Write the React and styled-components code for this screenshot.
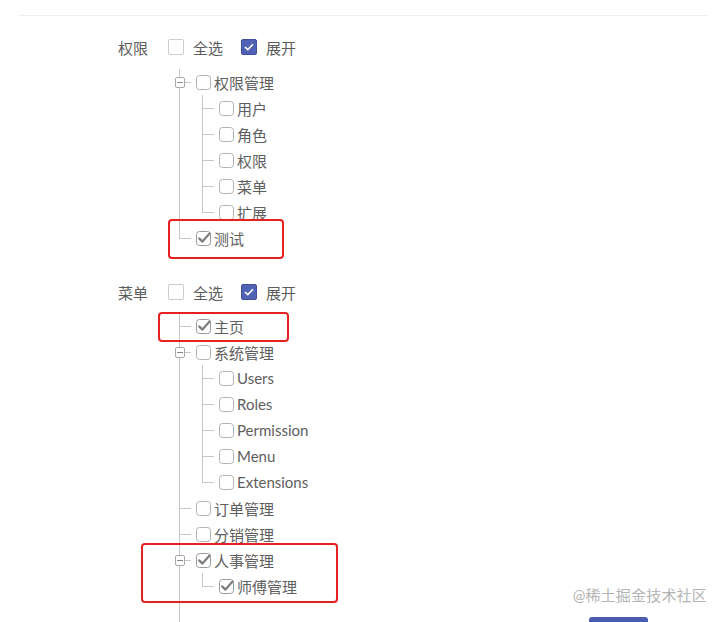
import React from 'react';
import styled, { createGlobalStyle } from 'styled-components';

const GlobalStyle = createGlobalStyle`
  body {
    margin: 0;
    background: #fff;
    font-family: Lato, "Noto Sans CJK SC", sans-serif;
    color: #5a5a5a;
  }
`;

const Page = styled.div`
  position: relative;
  width: 723px;
  height: 622px;
  overflow: hidden;
  padding-top: 15px;
  box-sizing: border-box;
`;

const Rule = styled.div`
  height: 1px;
  margin: 0 15px 0 18px;
  background: #f0f0f0;
`;

const Section = styled.section`
  padding-left: 118px;
  margin-top: ${p => p.$top}px;
`;

const Header = styled.div`
  display: flex;
  align-items: center;
  height: 26px;
  font-size: 15px;
`;

const Label = styled.span`
  width: 50px;
  color: #5c5c5c;
`;

const Option = styled.label`
  display: flex;
  align-items: center;
  gap: 9px;
  margin-right: 18px;
  color: #5c5c5c;
`;

const HeadBox = styled.span`
  width: 16px;
  height: 16px;
  box-sizing: border-box;
  border: 1px solid ${p => (p.$on ? '#3f4f9e' : '#c9ccd3')};
  border-radius: 2px;
  background: ${p => (p.$on ? '#5062b4' : '#fff')};
  display: flex;
  align-items: center;
  justify-content: center;
`;

const Tree = styled.ul`
  list-style: none;
  padding: 0;
  margin: ${p => (p.$root ? `${p.$gap}px 0 0 61px` : '0 0 0 6px')};
`;

const Node = styled.li`
  position: relative;
  padding-left: 17px;

  &::before {
    content: '';
    position: absolute;
    left: 0;
    top: 0;
    width: 1px;
    background: #c6c6c6;
    ${p => (p.$last ? 'height: 13px;' : `bottom: ${p.$tail ? '-30px' : '0'};`)}
  }

  &::after {
    content: '';
    position: absolute;
    left: 0;
    top: 13px;
    width: 12px;
    height: 1px;
    background: #c6c6c6;
  }
`;

const Toggle = styled.span`
  position: absolute;
  z-index: 1;
  left: -4px;
  top: 8px;
  width: 10px;
  height: 11px;
  box-sizing: border-box;
  border: 1px solid #a9a9a9;
  border-radius: 2px;
  background: #fff;

  &::after {
    content: '';
    position: absolute;
    left: 1px;
    right: 1px;
    top: 4px;
    height: 1px;
    background: #8a8a8a;
  }
`;

const Row = styled.div`
  display: flex;
  align-items: center;
  height: 26px;
  font-size: 15px;
  color: #5e5e5e;
  white-space: nowrap;
`;

const Box = styled.svg`
  flex: none;
  width: 15px;
  height: 15px;
  margin-right: 3px;
  overflow: visible;
`;

const Mark = styled.div`
  position: absolute;
  left: ${p => p.$x}px;
  top: ${p => p.$y}px;
  width: ${p => p.$w}px;
  height: ${p => p.$h}px;
  box-sizing: border-box;
  border: 2px solid #e5221f;
  border-radius: 4px;
  pointer-events: none;
`;

const Watermark = styled.div`
  position: absolute;
  right: 16px;
  top: 584px;
  font-size: 15px;
  color: #b4b4b4;
  letter-spacing: 0.2px;
`;

const Footer = styled.div`
  margin-top: 18px;
  padding-left: 589px;
`;

const Button = styled.button`
  width: 59px;
  height: 32px;
  border: none;
  border-radius: 3px;
  background: #4a5db3;
`;

const TreeCheck = ({ checked }) => (
  <Box viewBox="0 0 15 15">
    <rect x="0.5" y="0.5" width="14" height="14" rx="3" fill="#fff" stroke={checked ? '#9a9a9a' : '#b3b3b3'} />
    {checked && (
      <path d="M3.2 7.4 L6.4 10.6 L13.6 2.6" fill="none" stroke="#7d7d7d" strokeWidth="2.2" strokeLinecap="round" strokeLinejoin="round" />
    )}
  </Box>
);

const TreeNode = ({ item, last, tail }) => (
  <Node $last={last} $tail={tail}>
    {item.children && <Toggle />}
    <Row>
      <TreeCheck checked={item.checked} />
      {item.label}
    </Row>
    {item.children && (
      <Tree>
        {item.children.map((c, i) => (
          <TreeNode key={c.label} item={c} last={i === item.children.length - 1} />
        ))}
      </Tree>
    )}
  </Node>
);

const SectionBlock = ({ label, items, top, gap, open }) => (
  <Section $top={top}>
    <Header>
      <Label>{label}</Label>
      <Option>
        <HeadBox />
        全选
      </Option>
      <Option>
        <HeadBox $on>
          <svg width="10" height="8" viewBox="0 0 10 8">
            <path d="M1 4 L3.8 6.6 L9 1.2" fill="none" stroke="#fff" strokeWidth="1.6" />
          </svg>
        </HeadBox>
        展开
      </Option>
    </Header>
    <Tree $root $gap={gap}>
      {items.map((it, i) => {
        const isLast = i === items.length - 1;
        return <TreeNode key={it.label} item={it} last={isLast && !open} tail={isLast && open} />;
      })}
    </Tree>
  </Section>
);

const permissions = [
  {
    label: '权限管理',
    children: [{ label: '用户' }, { label: '角色' }, { label: '权限' }, { label: '菜单' }, { label: '扩展' }],
  },
  { label: '测试', checked: true },
];

const menus = [
  { label: '主页', checked: true },
  {
    label: '系统管理',
    children: [{ label: 'Users' }, { label: 'Roles' }, { label: 'Permission' }, { label: 'Menu' }, { label: 'Extensions' }],
  },
  { label: '订单管理' },
  { label: '分销管理' },
  { label: '人事管理', checked: true, children: [{ label: '师傅管理', checked: true }] },
];

export default function App() {
  return (
    <Page>
      <GlobalStyle />
      <Rule />
      <SectionBlock label="权限" items={permissions} top={18} gap={9} />
      <SectionBlock label="菜单" items={menus} top={28} gap={8} open />
      <Footer>
        <Button />
      </Footer>

      <Mark $x={168} $y={219} $w={116} $h={40} />
      <Mark $x={158} $y={312} $w={131} $h={30} />
      <Mark $x={141} $y={543} $w={197} $h={60} />
      <Watermark>@稀土掘金技术社区</Watermark>
    </Page>
  );
}
